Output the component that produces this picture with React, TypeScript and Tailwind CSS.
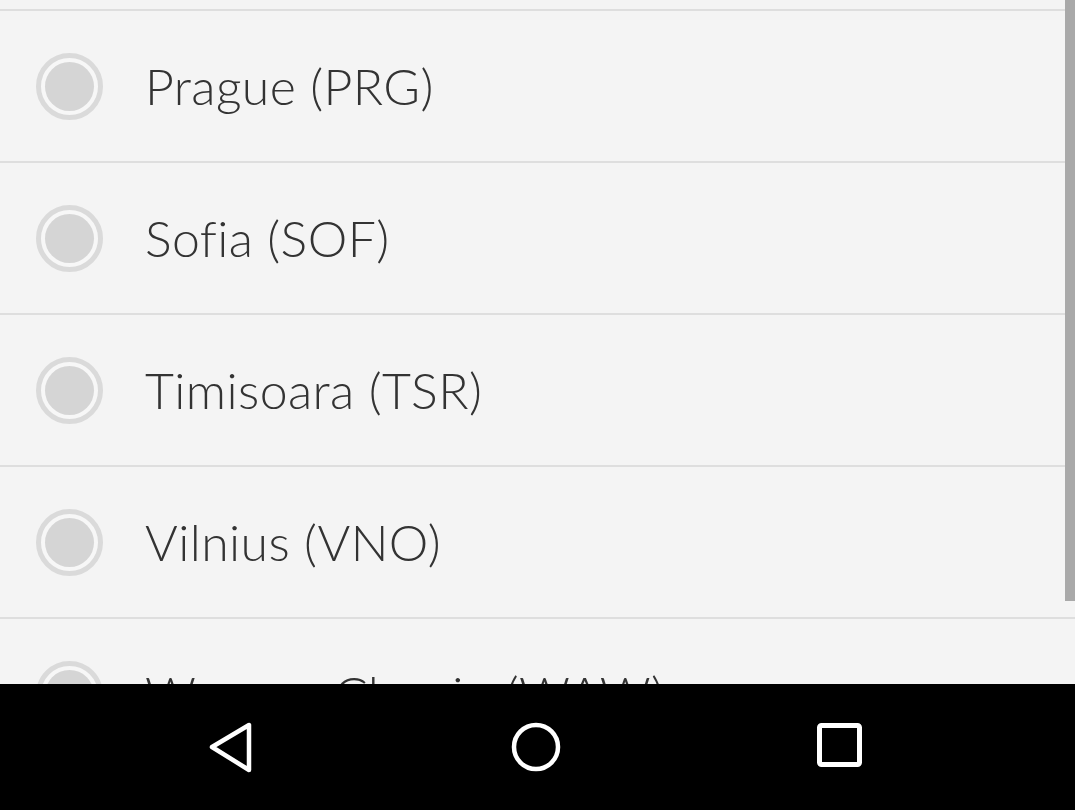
import React from "react";

const airports = [
  "Prague (PRG)",
  "Sofia (SOF)",
  "Timisoara (TSR)",
  "Vilnius (VNO)",
  "Warsaw Chopin (WAW)",
];

function Radio() {
  return (
    <div className="w-[67px] h-[67px] rounded-full border-[5px] border-[#dadada] bg-[#f7f7f7] flex items-center justify-center shrink-0">
      <div className="w-[49px] h-[49px] rounded-full bg-[#d5d5d5]" />
    </div>
  );
}

export default function App() {
  return (
    <div className="w-[1075px] h-[810px] overflow-hidden flex flex-col bg-[#f4f4f4]" style={{ fontFamily: "Lato, 'Noto Sans', sans-serif" }}>
      <div className="relative flex-1 overflow-hidden">
        <div className="h-[9px]" />
        {airports.map((a) => (
          <div key={a} className="h-[152px] border-t-2 border-[#dedede] flex items-center pl-[36px]">
            <Radio />
            <span className="ml-[42px] text-[50px] leading-none font-light text-[#333333] tracking-[0.4px] [font-variant-ligatures:none]">{a}</span>
          </div>
        ))}
        <div className="absolute right-0 top-0 w-[10px] h-[601px] bg-[#a9a9a9]" />
      </div>
      <div className="h-[126px] bg-black relative shrink-0">
        <svg className="absolute left-[205px] top-[34px]" width="50" height="58" viewBox="0 0 50 58">
          <path d="M7 29 L44 7 L44 52 Z" fill="none" stroke="white" strokeWidth="4.5" strokeLinejoin="round" />
        </svg>
        <svg className="absolute left-[508px] top-[35px]" width="56" height="56" viewBox="0 0 56 56">
          <circle cx="28" cy="28" r="22" fill="none" stroke="white" strokeWidth="4.5" />
        </svg>
        <svg className="absolute left-[813px] top-[37px]" width="52" height="48" viewBox="0 0 52 48">
          <rect x="6.5" y="4.5" width="40" height="39" rx="2" fill="none" stroke="white" strokeWidth="5" />
        </svg>
      </div>
    </div>
  );
}
